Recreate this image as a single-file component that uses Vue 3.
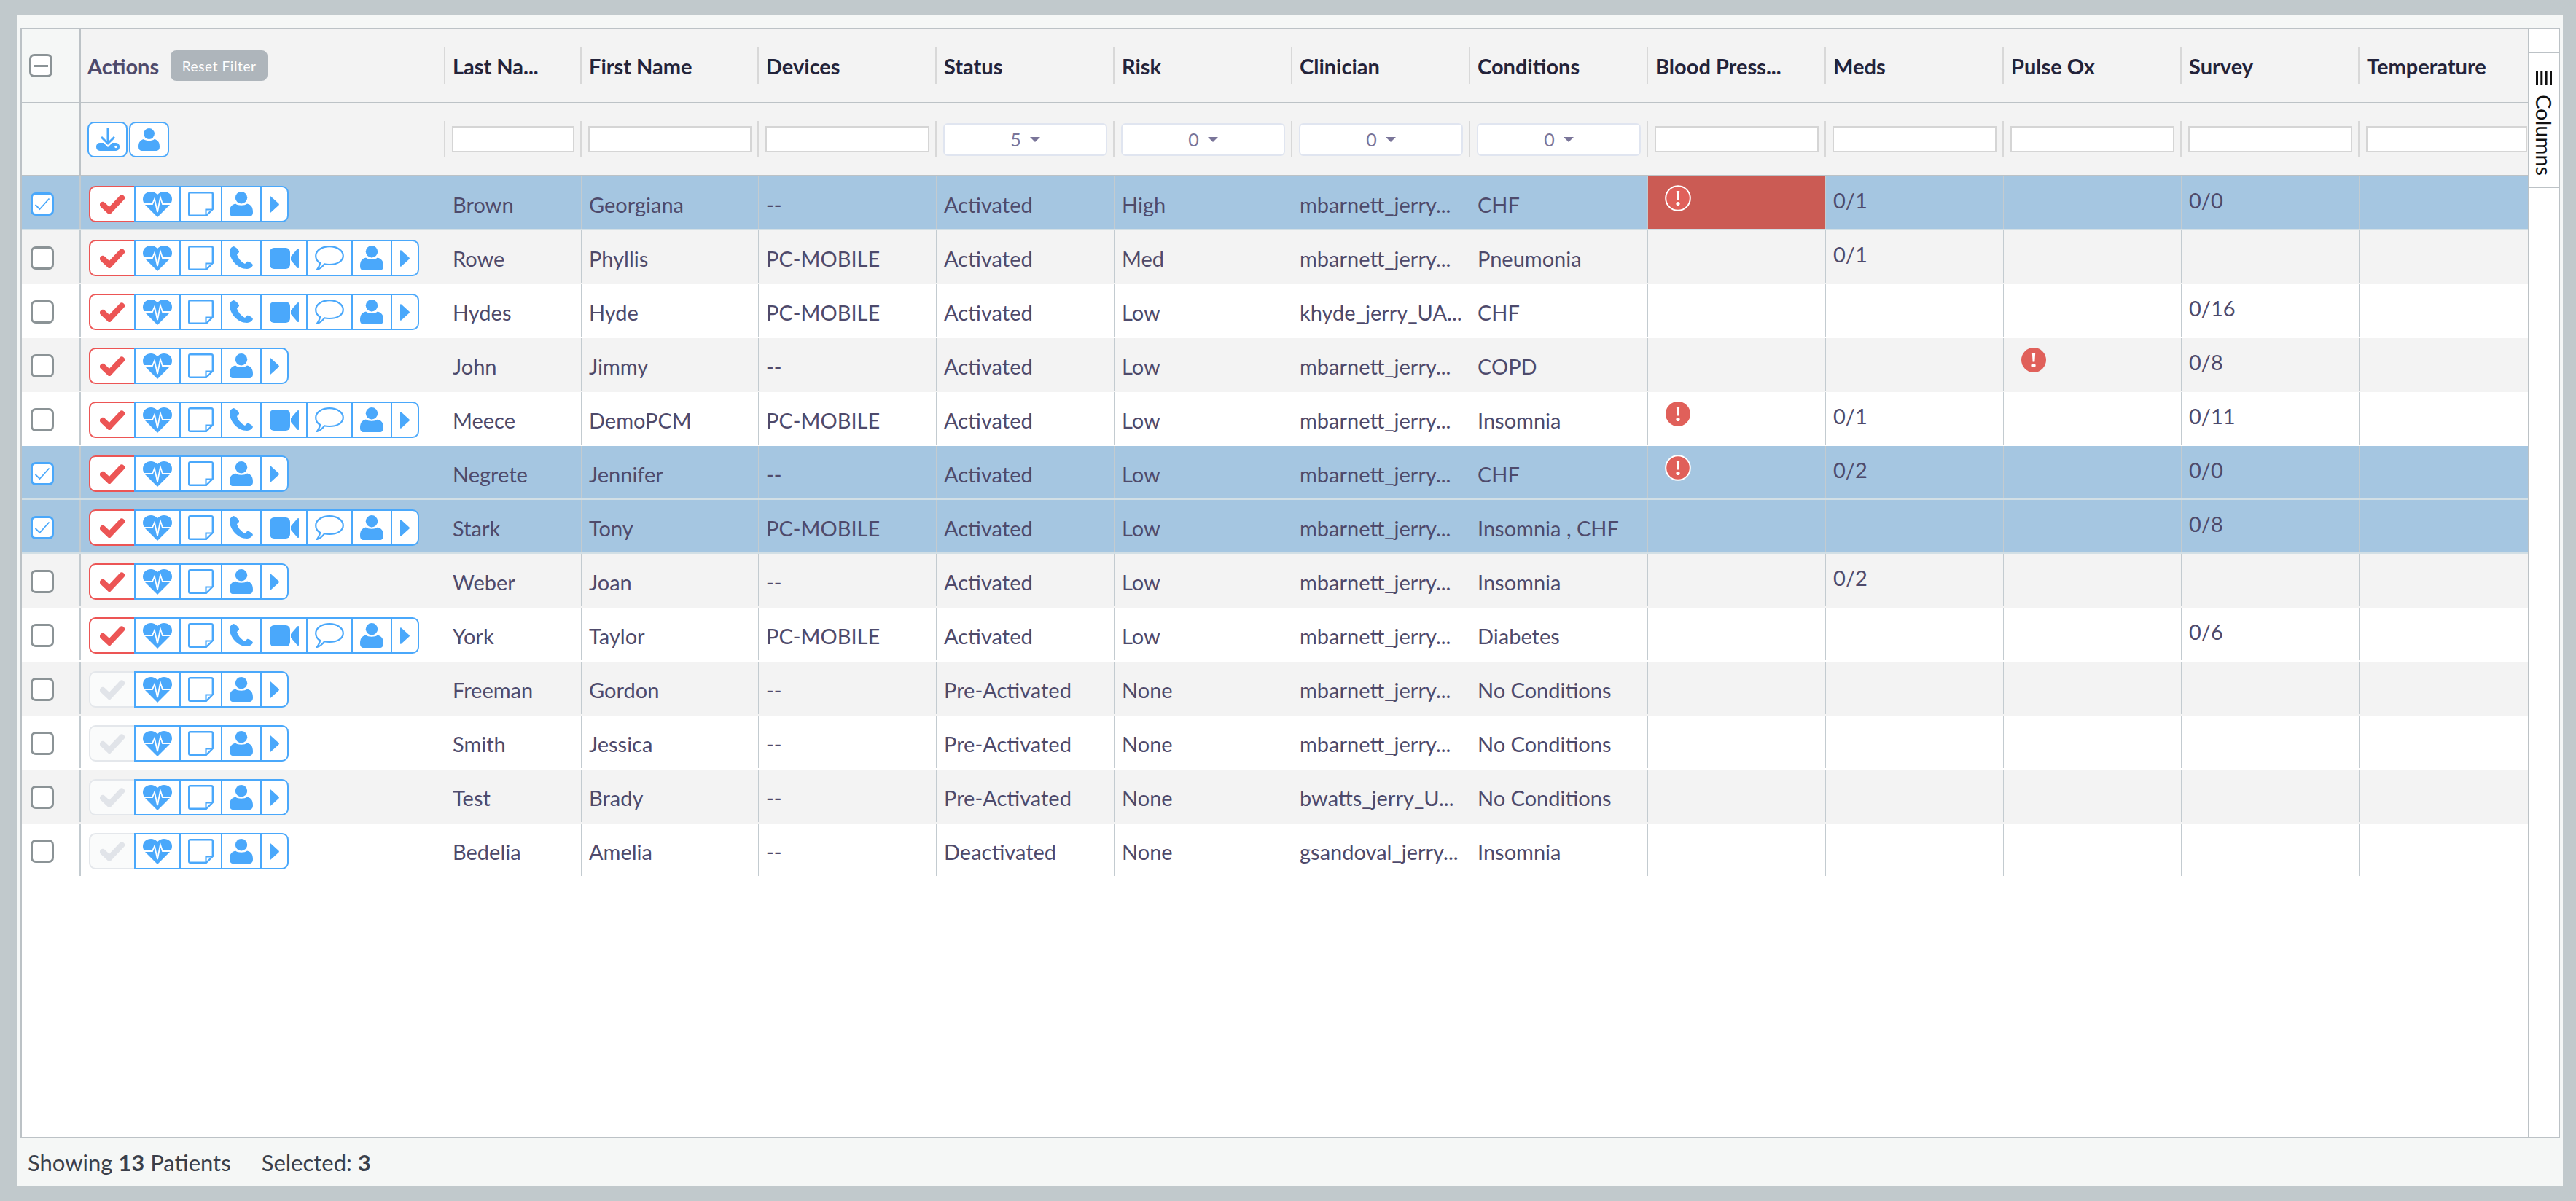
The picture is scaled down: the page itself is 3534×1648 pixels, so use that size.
<script setup>
import { ref } from 'vue'

const columns = ['Last Na...', 'First Name', 'Devices', 'Status', 'Risk', 'Clinician', 'Conditions', 'Blood Press...', 'Meds', 'Pulse Ox', 'Survey', 'Temperature']
const selectFilters = { Status: '5', Risk: '0', Clinician: '0', Conditions: '0' }

const m = 'mbarnett_jerry...'
const patients = ref([
  { sel: true, on: true, last: 'Brown', first: 'Georgiana', device: '--', status: 'Activated', risk: 'High', clin: m, cond: 'CHF', bp: 'hot', meds: '0/1', survey: '0/0' },
  { on: true, contact: true, last: 'Rowe', first: 'Phyllis', device: 'PC-MOBILE', status: 'Activated', risk: 'Med', clin: m, cond: 'Pneumonia', meds: '0/1' },
  { on: true, contact: true, last: 'Hydes', first: 'Hyde', device: 'PC-MOBILE', status: 'Activated', risk: 'Low', clin: 'khyde_jerry_UA...', cond: 'CHF', survey: '0/16' },
  { on: true, last: 'John', first: 'Jimmy', device: '--', status: 'Activated', risk: 'Low', clin: m, cond: 'COPD', pulse: true, survey: '0/8' },
  { on: true, contact: true, last: 'Meece', first: 'DemoPCM', device: 'PC-MOBILE', status: 'Activated', risk: 'Low', clin: m, cond: 'Insomnia', bp: 'alert', meds: '0/1', survey: '0/11' },
  { sel: true, on: true, last: 'Negrete', first: 'Jennifer', device: '--', status: 'Activated', risk: 'Low', clin: m, cond: 'CHF', bp: 'ring', meds: '0/2', survey: '0/0' },
  { sel: true, on: true, contact: true, last: 'Stark', first: 'Tony', device: 'PC-MOBILE', status: 'Activated', risk: 'Low', clin: m, cond: 'Insomnia , CHF', survey: '0/8' },
  { on: true, last: 'Weber', first: 'Joan', device: '--', status: 'Activated', risk: 'Low', clin: m, cond: 'Insomnia', meds: '0/2' },
  { on: true, contact: true, last: 'York', first: 'Taylor', device: 'PC-MOBILE', status: 'Activated', risk: 'Low', clin: m, cond: 'Diabetes', survey: '0/6' },
  { last: 'Freeman', first: 'Gordon', device: '--', status: 'Pre-Activated', risk: 'None', clin: m, cond: 'No Conditions' },
  { last: 'Smith', first: 'Jessica', device: '--', status: 'Pre-Activated', risk: 'None', clin: m, cond: 'No Conditions' },
  { last: 'Test', first: 'Brady', device: '--', status: 'Pre-Activated', risk: 'None', clin: 'bwatts_jerry_U...', cond: 'No Conditions' },
  { last: 'Bedelia', first: 'Amelia', device: '--', status: 'Deactivated', risk: 'None', clin: 'gsandoval_jerry...', cond: 'Insomnia' },
])
</script>

<template>
  <div class="page">
    <div class="panel">
      <div class="grid">
        <div class="main">
          <!-- header -->
          <div class="cols head">
            <div class="check-col">
              <span class="box minus"><i></i></span>
            </div>
            <div class="actions-head">
              <b>Actions</b>
              <span class="reset">Reset Filter</span>
            </div>
            <div v-for="c in columns" :key="c" class="hcell">
              <div class="hinner">{{ c }}</div>
            </div>
          </div>

          <!-- filters -->
          <div class="cols filters">
            <div class="check-col"></div>
            <div class="actions-filter">
              <button class="fbtn">
                <svg width="32" height="32" viewBox="0 0 32 32">
                  <rect x="0" y="21" width="32" height="11" rx="5" fill="#4aa8fb" />
                  <path d="M6 13.5 16 23.5 26 13.5" fill="none" stroke="#fff" stroke-width="5" />
                  <path d="M16 0V21M7 13 16 22 25 13" fill="none" stroke="#4aa8fb" stroke-width="3" />
                  <circle cx="27" cy="26.5" r="1.7" fill="#fff" />
                </svg>
              </button>
              <button class="fbtn">
                <svg width="29" height="31" viewBox="0 0 32 34">
                  <circle cx="16" cy="8.2" r="8.2" fill="#4aa8fb" />
                  <path d="M0 28C0 22 2 18 8 16.5 11 19.5 21 19.5 24 16.5 30 18 32 22 32 28 32 32 30 34 27 34H5C2 34 0 32 0 28Z" fill="#4aa8fb" />
                </svg>
              </button>
            </div>
            <div v-for="(c, i) in columns" :key="c" class="hcell">
              <div class="finner" :class="{ last: i === columns.length - 1 }">
                <div v-if="selectFilters[c]" class="fselect">
                  <span>{{ selectFilters[c] }}</span><i class="caret"></i>
                </div>
                <div v-else class="finput"></div>
              </div>
            </div>
          </div>

          <!-- rows -->
          <div v-for="(p, i) in patients" :key="p.last" class="cols row" :class="{ selected: p.sel, odd: i % 2 === 1 }">
            <div class="check-col body-check">
              <span class="box" :class="{ checked: p.sel }">
                <svg v-if="p.sel" width="22" height="18" viewBox="0 0 22 18">
                  <path d="M1.5 10 7.5 16 20.5 1.5" fill="none" stroke="#4aa8fb" stroke-width="1.8" />
                </svg>
              </span>
            </div>
            <div class="cell-actions">
              <div class="acts">
                <span class="act a-check" :class="{ off: !p.on }">
                  <svg width="34" height="27" viewBox="0 0 34 27">
                    <path d="M4 14 13 22.5 30 4.5" fill="none" stroke="currentColor" stroke-width="8" stroke-linecap="round" />
                  </svg>
                </span>
                <span class="act a-heart">
                  <svg width="40" height="35" viewBox="0 0 40 35">
                    <path d="M20 35 3 18C-1 13-1 7 3 3 8-1 15-1 20 4 25-1 32-1 37 3 41 7 41 13 37 18Z" fill="#4aa8fb" />
                    <path d="M0 17H13L16 10 20 28 24 8 27 17H40" fill="none" stroke="#fff" stroke-width="1.8" />
                  </svg>
                </span>
                <span class="act a-note">
                  <svg width="35" height="34" viewBox="0 0 35 34">
                    <path d="M3 1.2H32A1.8 1.8 0 0 1 33.8 3V24L25 32.8H3A1.8 1.8 0 0 1 1.2 31V3A1.8 1.8 0 0 1 3 1.2Z" fill="none" stroke="#4aa8fb" stroke-width="2.4" />
                    <path d="M33 24.5H24.5V32.5" fill="none" stroke="#4aa8fb" stroke-width="2.2" />
                  </svg>
                </span>
                <span v-if="p.contact" class="act a-phone">
                  <svg width="32" height="32" viewBox="0 0 32 32">
                    <path d="M5 0C3 1 0 3 0 7 0 17 10 31 24 31 28 31 31 28 32 26 32 24 26 20 24 21L21 24C15 21 11 15 10 11L13 8C14 6 8 0 5 0Z" fill="#4aa8fb" />
                  </svg>
                </span>
                <span v-if="p.contact" class="act a-video">
                  <svg width="40" height="29" viewBox="0 0 40 29">
                    <rect width="28" height="29" rx="6" fill="#4aa8fb" />
                    <path d="M29 12 38 1.5C39 .5 40 1 40 2V27C40 28 39 28.5 38 27.5L29 17Z" fill="#4aa8fb" />
                  </svg>
                </span>
                <span v-if="p.contact" class="act a-chat">
                  <svg width="40" height="34" viewBox="0 0 40 34">
                    <path d="M20 1.2C31 1.2 38.8 7 38.8 14 38.8 21 31 26 20 26 17 26 15 26 13 25.3 11 28 7 32 3 32.8 5 30 7 27 7 23.8 3 21.5 1.2 18 1.2 14 1.2 7 9 1.2 20 1.2Z" fill="none" stroke="#4aa8fb" stroke-width="2.2" />
                  </svg>
                </span>
                <span class="act a-user">
                  <svg width="32" height="34" viewBox="0 0 32 34">
                    <circle cx="16" cy="8.2" r="8.2" fill="#4aa8fb" />
                    <path d="M0 28C0 22 2 18 8 16.5 11 19.5 21 19.5 24 16.5 30 18 32 22 32 28 32 32 30 34 27 34H5C2 34 0 32 0 28Z" fill="#4aa8fb" />
                  </svg>
                </span>
                <span class="act a-arrow">
                  <svg width="13" height="23" viewBox="0 0 13 23">
                    <path d="M0 1C0 0 1 0 1.5 .5L12.5 10.5C13 11 13 12 12.5 12.5L1.5 22.5C1 23 0 23 0 22Z" fill="#4aa8fb" />
                  </svg>
                </span>
              </div>
            </div>
            <div class="cell">{{ p.last }}</div>
            <div class="cell">{{ p.first }}</div>
            <div class="cell">{{ p.device }}</div>
            <div class="cell">{{ p.status }}</div>
            <div class="cell">{{ p.risk }}</div>
            <div class="cell">{{ p.clin }}</div>
            <div class="cell">{{ p.cond }}</div>
            <div class="cell vital" :class="{ hot: p.bp === 'hot' }">
              <svg v-if="p.bp === 'hot' || p.bp === 'ring'" class="alert" width="36" height="36" viewBox="0 0 36 36">
                <circle cx="18" cy="18" r="16.8" fill="#e0605a" stroke="#fff" stroke-width="2" />
                <path d="M15.8 8H20.2L19.4 20.5H16.6Z" fill="#fff" />
                <circle cx="18" cy="25.5" r="2.6" fill="#fff" />
              </svg>
              <svg v-if="p.bp === 'alert'" class="alert" width="36" height="36" viewBox="0 0 36 36">
                <circle cx="18" cy="18" r="17" fill="#e0605a" />
                <path d="M15.8 8H20.2L19.4 20.5H16.6Z" fill="#fff" />
                <circle cx="18" cy="25.5" r="2.6" fill="#fff" />
              </svg>
            </div>
            <div class="cell vital">{{ p.meds }}</div>
            <div class="cell vital">
              <svg v-if="p.pulse" class="alert" width="36" height="36" viewBox="0 0 36 36">
                <circle cx="18" cy="18" r="17" fill="#e0605a" />
                <path d="M15.8 8H20.2L19.4 20.5H16.6Z" fill="#fff" />
                <circle cx="18" cy="25.5" r="2.6" fill="#fff" />
              </svg>
            </div>
            <div class="cell vital">{{ p.survey }}</div>
            <div class="cell vital"></div>
          </div>
        </div>

        <!-- side bar -->
        <div class="side">
          <div class="side-tab">
            <svg width="22" height="19" viewBox="0 0 22 19">
              <path d="M0 0H3V19H0ZM6.3 0H9.3V19H6.3ZM12.6 0H15.6V19H12.6ZM19 0H22V19H19Z" fill="#111" />
            </svg>
            <span>Columns</span>
          </div>
        </div>
      </div>

      <div class="foot">
        <span>Showing <b>13</b> Patients</span>
        <span>Selected: <b>3</b></span>
      </div>
    </div>
  </div>
</template>

<style scoped>
.page {
  box-sizing: border-box;
  width: 3534px;
  height: 1648px;
  padding: 20px 18px 20px 24px;
  background: #c1c9cc;
  font-family: Lato, "Liberation Sans", sans-serif;
  overflow: hidden;
}
.panel {
  height: 100%;
  background: #f5f7f6;
  padding: 18px 4px 0;
  box-sizing: border-box;
  display: flex;
  flex-direction: column;
}
.grid {
  flex: 1;
  min-height: 0;
  display: flex;
  border: 2px solid #bcc2c6;
  background: #fff;
}
.main {
  flex: 1;
  min-width: 0;
  overflow: hidden;
}
.cols {
  display: grid;
  grid-template-columns: 81px 499px 187px 243px repeat(9, 244px) 232px;
  align-items: stretch;
}
.check-col {
  display: flex;
  align-items: center;
  box-sizing: border-box;
  padding-left: 10px;
  background: #f5f7f6;
  border-right: 2px solid #bcc2c6;
}

/* header */
.head {
  height: 102px;
  box-sizing: border-box;
  border-bottom: 2px solid #bcc2c6;
  background: #f3f3f3;
}
.actions-head {
  display: flex;
  align-items: center;
  padding-left: 9px;
  gap: 16px;
  font-size: 29px;
  color: #4e4a6b;
}
.reset {
  background: #aeb5bb;
  color: #fff;
  border-radius: 8px;
  height: 42px;
  width: 133px;
  display: flex;
  align-items: center;
  justify-content: center;
  font-size: 19px;
  letter-spacing: .6px;
}
.hcell {
  display: flex;
  align-items: center;
  min-width: 0;
}
.hinner {
  flex: 1;
  min-width: 0;
  height: 50px;
  margin-left: -1px;
  padding-left: 10px;
  border-left: 2px solid #d8d8d8;
  display: flex;
  align-items: center;
  font-size: 29px;
  font-weight: 700;
  color: #23233a;
  white-space: nowrap;
}

/* filters */
.filters {
  height: 100px;
  box-sizing: border-box;
  border-bottom: 2px solid #bcc2c6;
  background: #f3f3f3;
}
.actions-filter {
  display: flex;
  align-items: center;
  padding-left: 9px;
  gap: 2px;
}
.fbtn {
  width: 55px;
  height: 49px;
  padding: 0;
  box-sizing: border-box;
  background: #fff;
  border: 2px solid #4aa8fb;
  border-radius: 9px;
  display: flex;
  align-items: center;
  justify-content: center;
}
.finner {
  flex: 1;
  min-width: 0;
  height: 50px;
  margin-left: -1px;
  padding: 0 9px 0 9px;
  border-left: 2px solid #d8d8d8;
  display: flex;
  align-items: center;
}
.finner.last {
  padding-right: 1px;
}
.finput {
  flex: 1;
  height: 36px;
  box-sizing: border-box;
  background: #fff;
  border: 2px solid #d5d5d5;
}
.fselect {
  flex: 1;
  height: 45px;
  box-sizing: border-box;
  background: #fff;
  border: 2px solid #e0e5f0;
  border-radius: 6px;
  display: flex;
  align-items: center;
  justify-content: center;
  gap: 12px;
  font-size: 25px;
  color: #7a7599;
}
.caret {
  border-left: 7px solid transparent;
  border-right: 7px solid transparent;
  border-top: 7px solid #7a7599;
}

/* rows */
.row {
  height: 74px;
  box-sizing: border-box;
  background: #fff;
  border-bottom: 2px solid #fff;
  font-size: 29px;
  color: #4e4a6b;
}
.row.odd {
  background: #f3f3f3;
}
.row.selected {
  background: #a5c6e1;
  border-bottom-color: #d2dfe5;
}
.row.odd:not(.selected) {
  border-bottom-color: #f3f3f3;
}
.row .body-check {
  background: transparent;
  padding: 4px 0 0 12px;
  border-right: 3px solid #c3cbd0;
}
.cell-actions {
  padding: 13px 0 0 11px;
}
.cell {
  box-sizing: border-box;
  border-left: 1px solid #c3cbd0;
  padding: 5px 0 0 10px;
  display: flex;
  align-items: center;
  white-space: nowrap;
  min-width: 0;
}
.vital {
  align-items: flex-start;
  padding-top: 20px;
  line-height: 26px;
}
.vital .alert {
  margin: -8px 0 0 13px;
}
.cell.hot {
  background: #cb5b54;
}

/* checkboxes */
.box {
  width: 32px;
  height: 32px;
  box-sizing: border-box;
  border: 3px solid #8b9396;
  border-radius: 7px;
  background: #fff;
  display: flex;
  align-items: center;
  justify-content: center;
}
.box.checked {
  border-color: #4aa8fb;
}
.box.minus i {
  width: 20px;
  height: 3px;
  background: #8b9396;
}

/* action button group */
.acts {
  display: flex;
  height: 50px;
}
.act {
  box-sizing: border-box;
  height: 50px;
  margin-left: -2px;
  border: 2px solid #4aa8fb;
  background: #fff;
  display: flex;
  align-items: center;
  justify-content: center;
}
.a-check {
  margin-left: 0;
  width: 64px;
  color: #ec5555;
  border-color: #ec5555;
  border-radius: 9px 0 0 9px;
}
.a-check.off {
  color: #e1e4e9;
  border-color: #e4e7eb;
  background: #fafbfb;
}
.a-heart { width: 64px; }
.a-note { width: 59px; }
.a-phone { width: 56px; }
.a-video { width: 65px; }
.a-chat { width: 64px; }
.a-user { width: 56px; }
.a-arrow {
  width: 39px;
  border-radius: 0 9px 9px 0;
}

/* side bar */
.side {
  width: 42px;
  box-sizing: border-box;
  border-left: 2px solid #bcc2c6;
  background: #fff;
  padding-top: 31px;
}
.side-tab {
  height: 187px;
  box-sizing: border-box;
  border-top: 2px solid #bcc2c6;
  border-bottom: 2px solid #bcc2c6;
  display: flex;
  flex-direction: column;
  align-items: center;
  padding-top: 24px;
  gap: 14px;
}
.side-tab span {
  writing-mode: vertical-rl;
  font-size: 29px;
  line-height: 30px;
  color: #111;
}

/* footer */
.foot {
  height: 66px;
  display: flex;
  align-items: center;
  gap: 42px;
  padding-left: 10px;
  font-size: 31px;
  color: #3a3f4a;
}
</style>
